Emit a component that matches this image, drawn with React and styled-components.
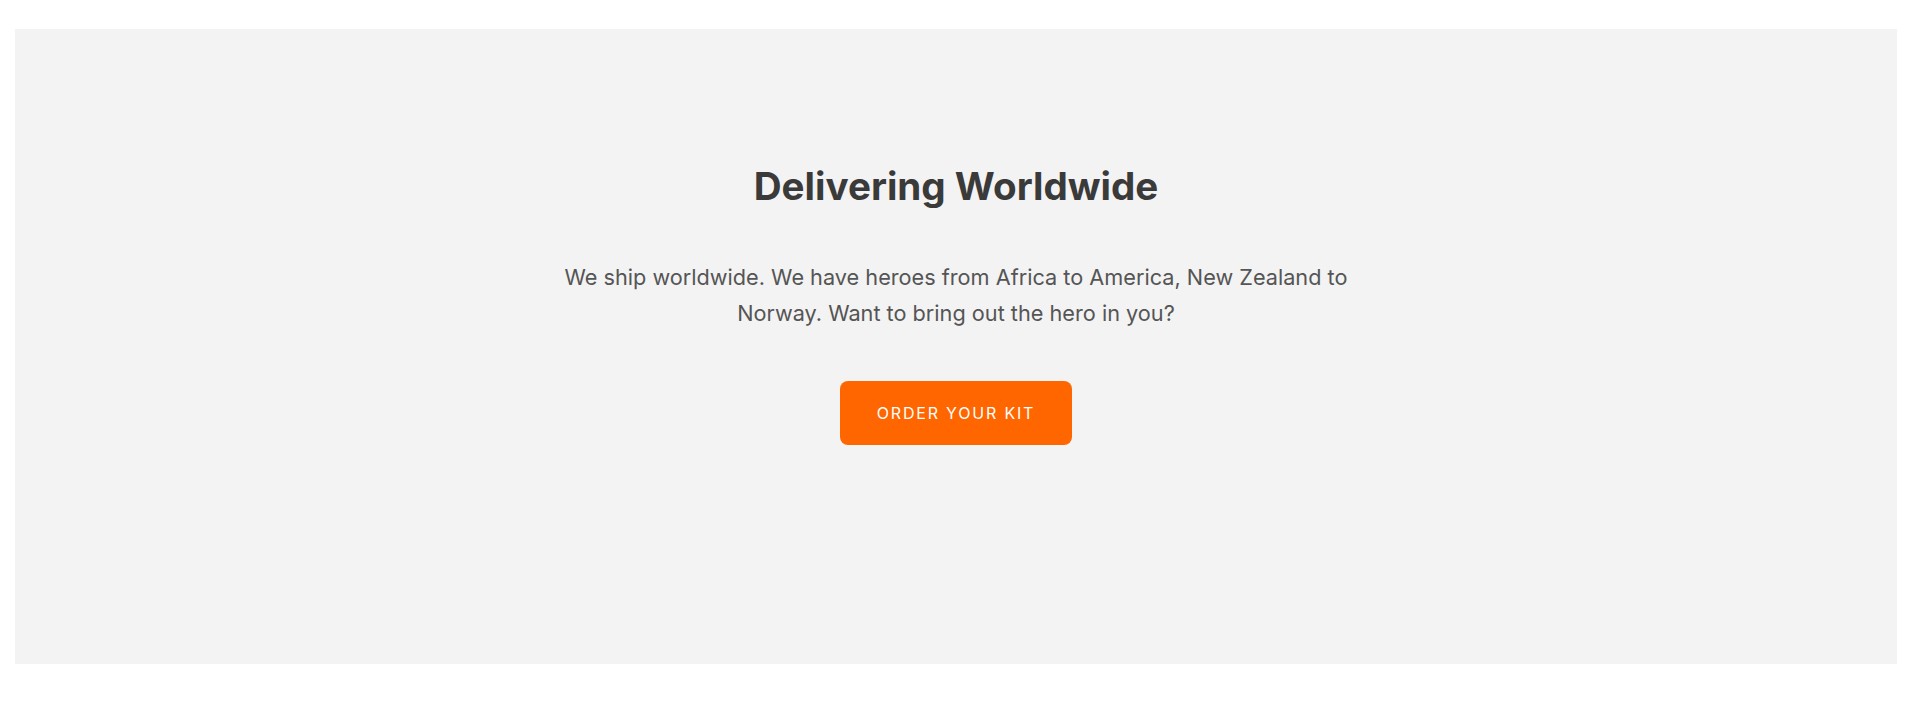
import React from 'react';
import styled, { createGlobalStyle } from 'styled-components';

const GlobalStyle = createGlobalStyle`
  html, body {
    margin: 0;
    padding: 0;
    background: #ffffff;
  }
  body {
    font-family: Inter, "Liberation Sans", Arial, sans-serif;
  }
`;

const Page = styled.div`
  padding: 29px 23px 52px 15px;
`;

const Section = styled.section`
  height: 635px;
  box-sizing: border-box;
  background: #f3f3f3;
  padding-top: 136px;
  display: flex;
  flex-direction: column;
  align-items: center;
  text-align: center;
`;

const Title = styled.h2`
  margin: 0;
  font-size: 38.6px;
  line-height: 43px;
  font-weight: 700;
  color: #3a3a3a;
`;

const Text = styled.p`
  margin: 51px 0 0;
  max-width: 820px;
  font-size: 21.7px;
  line-height: 36px;
  font-weight: 400;
  color: #555555;
`;

const Button = styled.button`
  margin-top: 50px;
  width: 232px;
  height: 64px;
  border: none;
  border-radius: 8px;
  background: #ff6600;
  color: #ffffff;
  font-family: inherit;
  font-size: 16px;
  font-weight: 400;
  letter-spacing: 1.8px;
  text-transform: uppercase;
  cursor: pointer;
`;

const App = () => {
  return (
    <>
      <GlobalStyle />
      <Page>
        <Section>
          <Title>Delivering Worldwide</Title>
          <Text>
            We ship worldwide. We have heroes from Africa to America, New Zealand to
            Norway. Want to bring out the hero in you?
          </Text>
          <Button>Order your kit</Button>
        </Section>
      </Page>
    </>
  );
};

export default App;
